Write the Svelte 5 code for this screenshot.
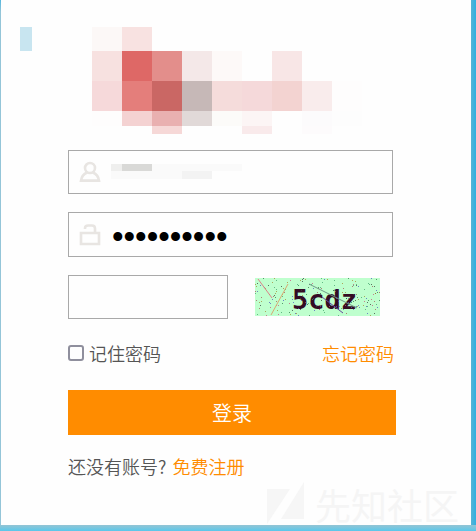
<script>
  let username = $state('');
  let password = $state('0123456789');
  let code = $state('');
  let remember = $state(false);

  // Blurred logo tiles: x, y, width, height, colour
  const tiles = [
    [0, 0, 30, 24, '#fcf8f7'], [30, 0, 30, 24, '#f8e2e1'],
    [0, 24, 30, 30, '#f7e1e0'], [30, 24, 30, 30, '#de6866'], [60, 24, 30, 30, '#e38e8b'],
    [90, 24, 30, 30, '#f4e8e8'], [120, 24, 30, 30, '#fdf9f8'], [180, 24, 30, 30, '#f8e6e6'],
    [0, 54, 30, 30, '#f6d9da'], [30, 54, 30, 30, '#e47e7b'], [60, 54, 30, 30, '#ca6764'],
    [90, 54, 30, 30, '#c6b8b7'], [120, 54, 30, 30, '#f5dcdb'], [150, 54, 30, 30, '#f5d9da'],
    [180, 54, 30, 30, '#f3d3d1'], [210, 54, 30, 30, '#f9ecec'], [240, 54, 30, 30, '#fefdfd'],
    [0, 84, 30, 15, '#fefdfd'], [30, 84, 30, 15, '#f4d2d2'], [60, 84, 30, 15, '#e9b0b0'],
    [90, 84, 30, 15, '#e1d9d8'], [120, 84, 30, 15, '#fcfbf9'], [150, 84, 30, 15, '#fcf5f5'],
    [210, 84, 30, 15, '#fcfbfc'], [240, 84, 30, 15, '#fdfdfd'],
    [60, 99, 30, 8, '#f6d8d7'], [150, 99, 30, 8, '#f9eaeb'], [210, 99, 30, 8, '#fdfbfc']
  ];

  // Captcha speckles from a fixed seed
  const inks = ['#2f7a48', '#a65a55', '#4f5bc0', '#a58a32', '#34443b', '#c8547a', '#43a36b'];
  let seed = 47;
  const next = (n) => {
    seed = (seed * 16807) % 2147483647;
    return Math.floor((seed / 2147483647) * n);
  };
  const dots = Array.from({ length: 190 }, () => ({ x: next(125), y: next(38), c: inks[next(7)] }));
</script>

<div class="page">
  <main class="card">
    <header>
      <span class="mark"></span>
      <svg class="logo" viewBox="0 0 270 107" aria-hidden="true" shape-rendering="crispEdges">
        {#each tiles as [x, y, w, h, c]}
          <rect {x} {y} width={w} height={h} fill={c} />
        {/each}
      </svg>
    </header>

    <form onsubmit={(e) => e.preventDefault()}>
      <div class="field">
        <svg class="icon" viewBox="0 0 22 22" aria-hidden="true">
          <circle cx="11" cy="7" r="5" />
          <path d="M8 11.5C4.5 13 2.5 16 2 19.6H20C19.5 16 17.5 13 14 11.5" />
        </svg>
        <input type="text" aria-label="用户名" bind:value={username} />
        <svg class="mask" viewBox="0 0 131 15" aria-hidden="true" shape-rendering="crispEdges">
          <rect width="131" height="7" fill="#fafafa" />
          <rect width="11" height="7" fill="#efefee" />
          <rect x="11" width="30" height="7" fill="#d9d9d7" />
          <rect y="7" width="101" height="8" fill="#fafafa" />
          <rect x="71" y="7" width="30" height="8" fill="#f3f3f3" />
        </svg>
      </div>

      <div class="field tall">
        <svg class="icon" viewBox="0 0 22 22" aria-hidden="true">
          <path d="M2 9H20V20H2ZM6 5V4.5Q6 1.5 9 1.5H13Q16 1.5 16 4.5V9" />
        </svg>
        <input class="secret" type="password" aria-label="密码" bind:value={password} />
      </div>

      <div class="verify">
        <input type="text" aria-label="验证码" bind:value={code} />
        <svg class="captcha" viewBox="0 0 125 38" role="img" aria-label="验证码图片">
          <rect width="125" height="38" fill="#bfffce" />
          <text x="37" y="31">5cdz</text>
          {#each dots as d}
            <rect x={d.x} y={d.y} width="1" height="1" fill={d.c} opacity="0.75" />
          {/each}
          <path d="M3 1L17 20" stroke="#dd8188" />
          <path d="M33 6L16 37" stroke="#d8aa72" />
          <path d="M54 6L102 30" stroke="#719889" />
          <path d="M67 19L88 35" stroke="#67489b" />
        </svg>
      </div>

      <div class="options">
        <label><input type="checkbox" bind:checked={remember} />记住密码</label>
        <a href="#forgot">忘记密码</a>
      </div>

      <button type="submit">登录</button>
      <p>还没有账号?<a href="#register">免费注册</a></p>
    </form>

    <div class="watermark">
      <svg viewBox="0 0 38 46" aria-hidden="true">
        <path d="M1 8H24L1 43ZM38 1V38H15Z" />
      </svg>
      <span>先知社区</span>
    </div>
  </main>
</div>

<style>
  :global(body) {
    margin: 0;
  }
  .page {
    box-sizing: border-box;
    min-height: 100vh;
    display: flex;
    padding: 0 5px 6px 1px;
    background:
      linear-gradient(#94c4d4, #5ac8eb) bottom / 100% 6px no-repeat,
      linear-gradient(90deg, #58b5d6, #30afe0) right / 5px 100% no-repeat,
      linear-gradient(#55b8df, #94c5d8 12px);
    font-family: "Noto Sans CJK SC", "Noto Sans", sans-serif;
    font-size: 18px;
    line-height: 26px;
    font-weight: 350;
    color: #555;
  }
  .card {
    position: relative;
    box-sizing: border-box;
    flex: 1;
    min-width: 0;
    padding: 27px 75px 44px 19px;
    background: #fefefe;
  }
  header {
    display: flex;
    gap: 60px;
  }
  .mark {
    width: 12px;
    height: 24px;
    background: #c8e5f0;
  }
  .logo {
    width: 270px;
    height: 107px;
  }
  form {
    display: flex;
    flex-direction: column;
    gap: 18px;
    margin: 16px 0 0 48px;
  }
  input {
    box-sizing: border-box;
    margin: 0;
    border: 1px solid #a9a9a9;
    background: #fefefe;
    font: inherit;
    color: #000;
    outline: none;
  }
  .field {
    position: relative;
    box-sizing: border-box;
    height: 44px;
    margin-right: 3px;
    display: flex;
    align-items: center;
    gap: 11px;
    padding: 0 10px;
    border: 1px solid #a9a9a9;
  }
  .tall {
    height: 45px;
  }
  .field input {
    flex: 1;
    min-width: 0;
    height: 40px;
    padding: 0;
    border: 0;
  }
  .field .secret {
    padding-top: 5px;
    font-family: "Liberation Sans", sans-serif;
    font-size: 33px;
    font-weight: 400;
  }
  .icon {
    width: 22px;
    height: 22px;
    fill: none;
    stroke: #e8e5e2;
    stroke-width: 2.6;
  }
  .mask {
    position: absolute;
    left: 42px;
    top: 13px;
    width: 131px;
    height: 15px;
  }
  .verify {
    display: flex;
    align-items: center;
    gap: 27px;
  }
  .verify input {
    width: 160px;
    height: 44px;
    padding: 0 10px;
  }
  .captcha {
    width: 125px;
    height: 38px;
  }
  .captcha text {
    font: bold 27px "DejaVu Sans Mono", monospace;
    fill: #330c24;
  }
  .captcha path {
    fill: none;
    stroke-width: 1;
  }
  .options {
    display: flex;
    justify-content: space-between;
    margin: 3px 2px 6px 0;
  }
  label {
    display: flex;
    align-items: center;
    gap: 5px;
  }
  label input {
    appearance: none;
    width: 16px;
    height: 16px;
    border: 2px solid #8f8f9d;
    border-radius: 3px;
  }
  label input:checked {
    background: #ff8c00;
  }
  a {
    color: #ff8c00;
    text-decoration: none;
  }
  button {
    height: 45px;
    padding: 0;
    border: 0;
    background: #ff8c00;
    color: #fff;
    font: inherit;
    font-size: 20px;
  }
  p {
    display: flex;
    gap: 6px;
    margin: 0;
  }
  .watermark {
    position: absolute;
    right: 12px;
    bottom: -2px;
    display: flex;
    align-items: center;
    gap: 11px;
    color: #f5f5f5;
    font-size: 36px;
    line-height: 46px;
    font-weight: 400;
    pointer-events: none;
  }
  .watermark svg {
    width: 38px;
    height: 46px;
    fill: #f6f6f6;
  }
</style>
